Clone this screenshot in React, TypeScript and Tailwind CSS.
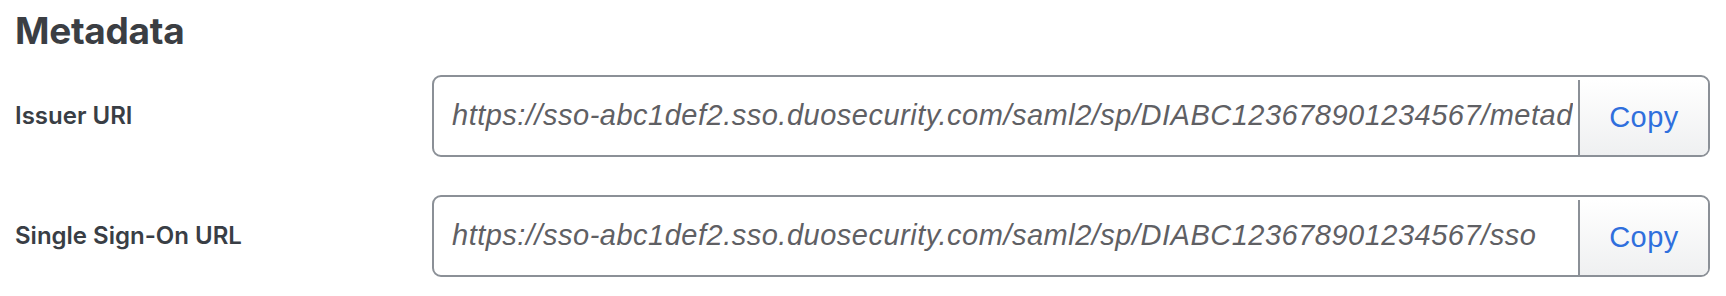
import React from "react";

const rows = [
  {
    label: "Issuer URI",
    value: "https://sso-abc1def2.sso.duosecurity.com/saml2/sp/DIABC123678901234567/metadata",
  },
  {
    label: "Single Sign-On URL",
    value: "https://sso-abc1def2.sso.duosecurity.com/saml2/sp/DIABC123678901234567/sso",
  },
];

export default function App() {
  return (
    <div className="w-[1726px] h-[296px] bg-white pl-[15px] pr-[16px] pt-[12px] overflow-hidden">
      <h2 className="font-['Inter',sans-serif] text-[37px] leading-none font-bold text-[#3b3e43] tracking-[-0.3px]">
        Metadata
      </h2>
      <div className="mt-[26px] flex flex-col gap-[38px]">
        {rows.map((r) => (
          <div key={r.label} className="flex items-center">
            <div className="w-[417px] shrink-0 font-['Inter',sans-serif] text-[24px] font-semibold text-[#393e45]">
              {r.label}
            </div>
            <div className="flex-1 h-[82px] flex border-2 border-[#8b9097] rounded-[9px] overflow-hidden bg-white">
              <div className="flex-1 min-w-0 flex items-center ml-[18px] mr-[5px] overflow-hidden">
                <span className="whitespace-nowrap font-['Liberation_Sans',Arial,sans-serif] italic text-[29px] tracking-[0.5px] text-[#5f6064]">
                  {r.value}
                </span>
              </div>
              <button className="w-[130px] shrink-0 mt-[3px] border-l-2 border-[#8b9097] bg-gradient-to-b from-white to-[#eff0f1] flex items-center justify-center font-['Liberation_Sans',Arial,sans-serif] text-[29px] tracking-[0.5px] text-[#2f6fdd]">
                Copy
              </button>
            </div>
          </div>
        ))}
      </div>
    </div>
  );
}
